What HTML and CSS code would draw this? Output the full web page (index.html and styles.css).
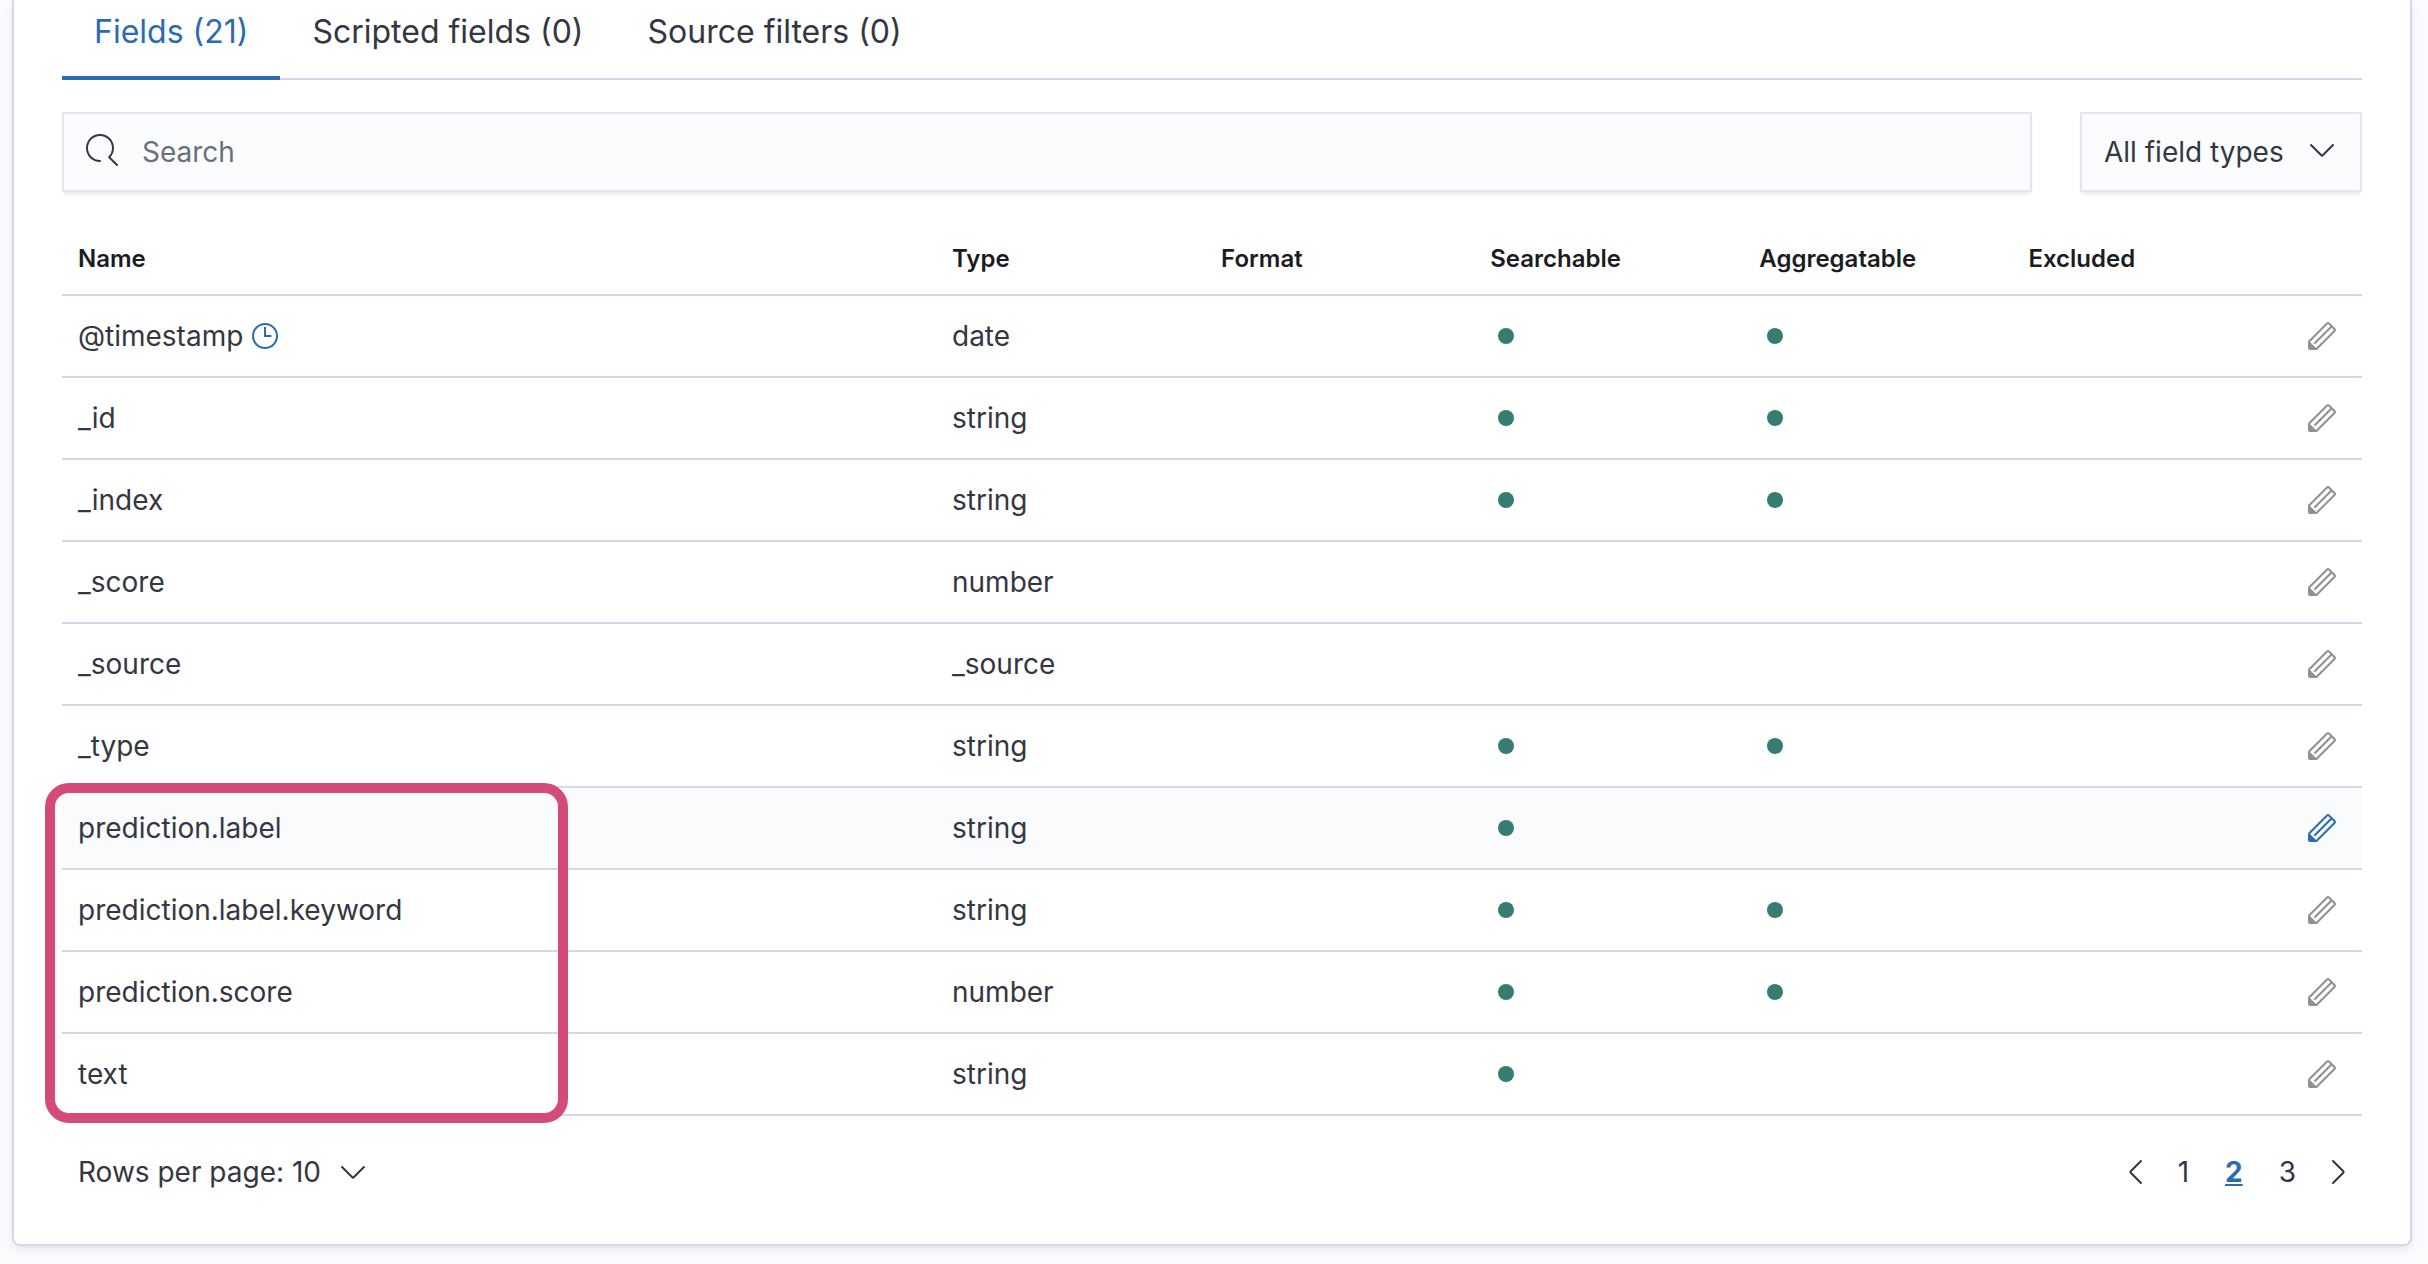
FILE: index.html
```
<!DOCTYPE html>
<html lang="en">
<head>
<meta charset="utf-8">
<title>Index pattern fields</title>
<link rel="stylesheet" href="styles.css">
</head>
<body>
<svg class="sprite" aria-hidden="true">
  <symbol id="pencil" viewBox="0 0 16 16"><path d="M12.148 3.148L11 2l-9 9v3h3l9-9-1.144-1.144-8.002 7.998a.502.502 0 01-.708 0 .502.502 0 010-.708l8.002-7.998zM11 1c.256 0 .512.098.707.293l3 3a.999.999 0 010 1.414l-9 9A.997.997 0 015 15H2a1 1 0 01-1-1v-3c0-.265.105-.52.293-.707l9-9A.997.997 0 0111 1zM5 14H2v-3l3 3z"/></symbol>
  <symbol id="search" viewBox="0 0 16 16"><path d="M11.271 11.978l3.872 3.873a.502.502 0 00.708 0 .502.502 0 000-.708l-3.565-3.564c2.38-2.747 2.267-6.923-.342-9.532-2.73-2.73-7.17-2.73-9.898 0-2.728 2.729-2.728 7.17 0 9.9a6.955 6.955 0 004.949 2.05.5.5 0 000-1 5.96 5.96 0 01-4.242-1.757 6.01 6.01 0 010-8.486 6.004 6.004 0 018.484 0 6.01 6.01 0 010 8.486.5.5 0 00.034.738z"/></symbol>
  <symbol id="clock" viewBox="0 0 16 16"><path d="M8 3.5V8h3.2M14 8A6 6 0 1 1 2 8a6 6 0 0 1 12 0z" fill="none" stroke="currentColor"/></symbol>
  <symbol id="dot" viewBox="0 0 16 16"><circle cx="8" cy="8" r="4"/></symbol>
  <symbol id="down" viewBox="0 0 16 16"><path d="M2.5 5.5l5.15 5.15a.5.5 0 00.7 0L13.500 5.500" fill="none" stroke="currentColor" stroke-linecap="round"/></symbol>
  <symbol id="left" viewBox="0 0 16 16"><path d="M10.500 2.500L5.350 7.650a.5.5 0 000 .7l5.150 5.150" fill="none" stroke="currentColor" stroke-linecap="round"/></symbol>
  <symbol id="right" viewBox="0 0 16 16"><path d="M5.500 2.500l5.150 5.150a.5.5 0 010 .7L5.500 13.500" fill="none" stroke="currentColor" stroke-linecap="round"/></symbol>
</svg>
<main class="panel">
  <div class="tabs" role="tablist">
    <button class="tab tab-selected" role="tab" aria-selected="true">Fields (21)</button>
    <button class="tab" role="tab" aria-selected="false">Scripted fields (0)</button>
    <button class="tab" role="tab" aria-selected="false">Source filters (0)</button>
  </div>
  <div class="filters">
    <div class="search">
      <svg class="icon search-icon"><use href="#search"/></svg>
      <input class="control search-input" type="search" placeholder="Search" aria-label="Search fields">
    </div>
    <div class="types">
      <select class="control types-select" aria-label="Field type"><option>All field types</option></select>
      <svg class="icon types-icon"><use href="#down"/></svg>
    </div>
  </div>
  <div class="table-wrap">
    <table class="fields">
      <colgroup><col class="col-name"><col class="col-data"><col class="col-data"><col class="col-data"><col class="col-data"><col class="col-data"><col></colgroup>
      <thead>
        <tr><th>Name</th><th>Type</th><th>Format</th><th>Searchable</th><th>Aggregatable</th><th>Excluded</th><td></td></tr>
      </thead>
      <tbody>
        <tr><td><span class="name">@timestamp <svg class="icon clock"><use href="#clock"/></svg></span></td><td>date</td><td></td><td><svg class="icon dot"><use href="#dot"/></svg></td><td><svg class="icon dot"><use href="#dot"/></svg></td><td></td><td><button class="edit" aria-label="Edit"><svg class="icon"><use href="#pencil"/></svg></button></td></tr>
        <tr><td>_id</td><td>string</td><td></td><td><svg class="icon dot"><use href="#dot"/></svg></td><td><svg class="icon dot"><use href="#dot"/></svg></td><td></td><td><button class="edit" aria-label="Edit"><svg class="icon"><use href="#pencil"/></svg></button></td></tr>
        <tr><td>_index</td><td>string</td><td></td><td><svg class="icon dot"><use href="#dot"/></svg></td><td><svg class="icon dot"><use href="#dot"/></svg></td><td></td><td><button class="edit" aria-label="Edit"><svg class="icon"><use href="#pencil"/></svg></button></td></tr>
        <tr><td>_score</td><td>number</td><td></td><td></td><td></td><td></td><td><button class="edit" aria-label="Edit"><svg class="icon"><use href="#pencil"/></svg></button></td></tr>
        <tr><td>_source</td><td>_source</td><td></td><td></td><td></td><td></td><td><button class="edit" aria-label="Edit"><svg class="icon"><use href="#pencil"/></svg></button></td></tr>
        <tr><td>_type</td><td>string</td><td></td><td><svg class="icon dot"><use href="#dot"/></svg></td><td><svg class="icon dot"><use href="#dot"/></svg></td><td></td><td><button class="edit" aria-label="Edit"><svg class="icon"><use href="#pencil"/></svg></button></td></tr>
        <tr class="row-active"><td>prediction.label</td><td>string</td><td></td><td><svg class="icon dot"><use href="#dot"/></svg></td><td></td><td></td><td><button class="edit" aria-label="Edit"><svg class="icon"><use href="#pencil"/></svg></button></td></tr>
        <tr><td>prediction.label.keyword</td><td>string</td><td></td><td><svg class="icon dot"><use href="#dot"/></svg></td><td><svg class="icon dot"><use href="#dot"/></svg></td><td></td><td><button class="edit" aria-label="Edit"><svg class="icon"><use href="#pencil"/></svg></button></td></tr>
        <tr><td>prediction.score</td><td>number</td><td></td><td><svg class="icon dot"><use href="#dot"/></svg></td><td><svg class="icon dot"><use href="#dot"/></svg></td><td></td><td><button class="edit" aria-label="Edit"><svg class="icon"><use href="#pencil"/></svg></button></td></tr>
        <tr><td>text</td><td>string</td><td></td><td><svg class="icon dot"><use href="#dot"/></svg></td><td></td><td></td><td><button class="edit" aria-label="Edit"><svg class="icon"><use href="#pencil"/></svg></button></td></tr>
      </tbody>
    </table>
    <div class="highlight"></div>
  </div>
  <div class="footer">
    <button class="page-size">Rows per page: 10 <svg class="icon"><use href="#down"/></svg></button>
    <nav class="pages" aria-label="Pagination">
      <button class="arrow" aria-label="Previous page"><svg class="icon"><use href="#left"/></svg></button>
      <button class="page">1</button>
      <button class="page page-current" aria-current="page">2</button>
      <button class="page">3</button>
      <button class="arrow" aria-label="Next page"><svg class="icon"><use href="#right"/></svg></button>
    </nav>
  </div>
</main>
</body>
</html>
```
FILE: styles.css
```
* { box-sizing: border-box; }
body {
  margin: 0;
  background: #fafbfd;
  color: #343741;
  font: 28px/48px Inter, "Liberation Sans", sans-serif;
}
button, input, select { font: inherit; color: inherit; }
button { margin: 0; padding: 0; border: 0; background: none; cursor: pointer; }
.sprite { display: none; }
.icon { display: block; flex: none; width: 32px; height: 32px; fill: currentColor; }

.panel {
  margin: 0 16px 16px 12px;
  padding: 0 48px 48px;
  background: #fff;
  border: solid #d3dae6;
  border-width: 0 2px 2px;
  border-radius: 0 0 8px 8px;
  box-shadow: 0 4px 8px -2px rgba(152, 162, 179, .3);
}

.tabs { display: flex; box-shadow: inset 0 -2px #d3dae6; }
.tab { padding: 8px 32px 20px; border-bottom: 4px solid transparent; font-size: 32px; }
.tab-selected { color: #2b6bb2; border-color: #2b6bb2; }

.filters { display: flex; gap: 48px; margin-top: 32px; }
.search { position: relative; flex: 1; }
.types { position: relative; width: 282px; }
.control {
  display: block;
  width: 100%;
  height: 80px;
  appearance: none;
  background: #fbfcfe;
  border: 2px solid #e3e6ef;
  border-radius: 0;
  box-shadow: 0 4px 4px -2px rgba(152, 162, 179, .25);
  outline: 0;
}
.search-input { padding: 0 24px 0 78px; }
.search-input::placeholder { color: #69707d; opacity: 1; }
.search-icon { position: absolute; left: 24px; top: 22px; }
.types-select { padding: 0 64px 0 22px; }
.types-icon { position: absolute; right: 24px; top: 22px; pointer-events: none; }

.table-wrap { position: relative; margin-top: 32px; }
.fields { width: 100%; border-collapse: separate; border-spacing: 0; table-layout: fixed; }
.col-name { width: 38%; }
.col-data { width: 11.7%; }
.fields th, .fields td { padding: 16px; border-bottom: 2px solid #d3dae6; text-align: left; }
.fields th { padding: 11px 16px; color: #1a1c21; font-size: 24px; font-weight: 600; }
.fields thead td { padding: 0; }
.fields tbody td:last-child { padding-right: 24px; }
.name { display: flex; align-items: center; gap: 6px; }
.clock { color: #2b6bb2; }
.dot { color: #367c73; }
.edit { display: block; margin-left: auto; color: #909090; }
.row-active { background: #fafbfd; }
.row-active .edit { color: #2b6bb2; }
.highlight {
  position: absolute;
  left: -17px;
  bottom: -7px;
  width: 523px;
  height: 340px;
  border: 10px solid #d54b78;
  border-radius: 24px;
  pointer-events: none;
}

.footer { display: flex; justify-content: space-between; margin-top: 32px; }
.page-size { display: flex; align-items: center; gap: 16px; padding-left: 16px; }
.pages { display: flex; }
.page { padding: 0 18px; }
.page-current { color: #2b6bb2; font-weight: 700; text-decoration: underline; }
.arrow { display: grid; place-items: center; width: 48px; }
```
